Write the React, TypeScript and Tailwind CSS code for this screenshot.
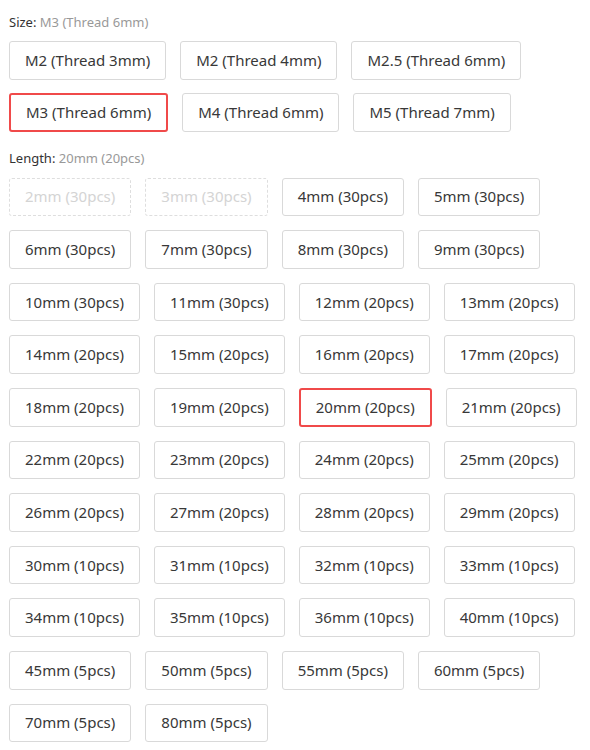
import React from "react";

const sizes = [
  "M2 (Thread 3mm)",
  "M2 (Thread 4mm)",
  "M2.5 (Thread 6mm)",
  "M3 (Thread 6mm)",
  "M4 (Thread 6mm)",
  "M5 (Thread 7mm)",
];

const lengths: [string, boolean][] = [
  ["2mm (30pcs)", true],
  ["3mm (30pcs)", true],
  ["4mm (30pcs)", false],
  ["5mm (30pcs)", false],
  ["6mm (30pcs)", false],
  ["7mm (30pcs)", false],
  ["8mm (30pcs)", false],
  ["9mm (30pcs)", false],
  ["10mm (30pcs)", false],
  ["11mm (30pcs)", false],
  ["12mm (20pcs)", false],
  ["13mm (20pcs)", false],
  ["14mm (20pcs)", false],
  ["15mm (20pcs)", false],
  ["16mm (20pcs)", false],
  ["17mm (20pcs)", false],
  ["18mm (20pcs)", false],
  ["19mm (20pcs)", false],
  ["20mm (20pcs)", false],
  ["21mm (20pcs)", false],
  ["22mm (20pcs)", false],
  ["23mm (20pcs)", false],
  ["24mm (20pcs)", false],
  ["25mm (20pcs)", false],
  ["26mm (20pcs)", false],
  ["27mm (20pcs)", false],
  ["28mm (20pcs)", false],
  ["29mm (20pcs)", false],
  ["30mm (10pcs)", false],
  ["31mm (10pcs)", false],
  ["32mm (10pcs)", false],
  ["33mm (10pcs)", false],
  ["34mm (10pcs)", false],
  ["35mm (10pcs)", false],
  ["36mm (10pcs)", false],
  ["40mm (10pcs)", false],
  ["45mm (5pcs)", false],
  ["50mm (5pcs)", false],
  ["55mm (5pcs)", false],
  ["60mm (5pcs)", false],
  ["70mm (5pcs)", false],
  ["80mm (5pcs)", false],
];

function Btn({ label, selected, disabled }: { label: string; selected?: boolean; disabled?: boolean }) {
  const base =
    "inline-flex items-center justify-center h-[38.6px] px-[15px] rounded-[3px] bg-white text-[15px] leading-none whitespace-nowrap";
  let cls = " border border-[#d9d9d9] text-[#383838]";
  if (selected) cls = " border-2 border-[#f04a4a] px-[14px] text-[#383838]";
  if (disabled) cls = " border border-dashed border-[#dedede] text-[#d4d4d4]";
  return <div className={base + cls}>{label}</div>;
}

export default function App() {
  return (
    <div
      className="w-[590px] min-h-[750px] bg-white px-[9px] pt-[12px]"
      style={{ fontFamily: '"Noto Sans", "Open Sans", sans-serif' }}
    >
      <div className="text-[13px] leading-[20px] text-[#333]">
        Size: <span className="text-[#999]">M3 (Thread 6mm)</span>
      </div>
      <div className="mt-[9px] flex flex-wrap gap-x-[14px] gap-y-[13.4px] w-[540px]">
        {sizes.map((s) => (
          <Btn key={s} label={s} selected={s === "M3 (Thread 6mm)"} />
        ))}
      </div>
      <div className="mt-[16px] text-[13px] leading-[20px] text-[#333]">
        Length: <span className="text-[#999]">20mm (20pcs)</span>
      </div>
      <div className="mt-[10px] flex flex-wrap gap-x-[14px] gap-y-[14px] w-[581px]">
        {lengths.map(([l, d]) => (
          <Btn key={l} label={l} disabled={d} selected={l === "20mm (20pcs)"} />
        ))}
      </div>
    </div>
  );
}
